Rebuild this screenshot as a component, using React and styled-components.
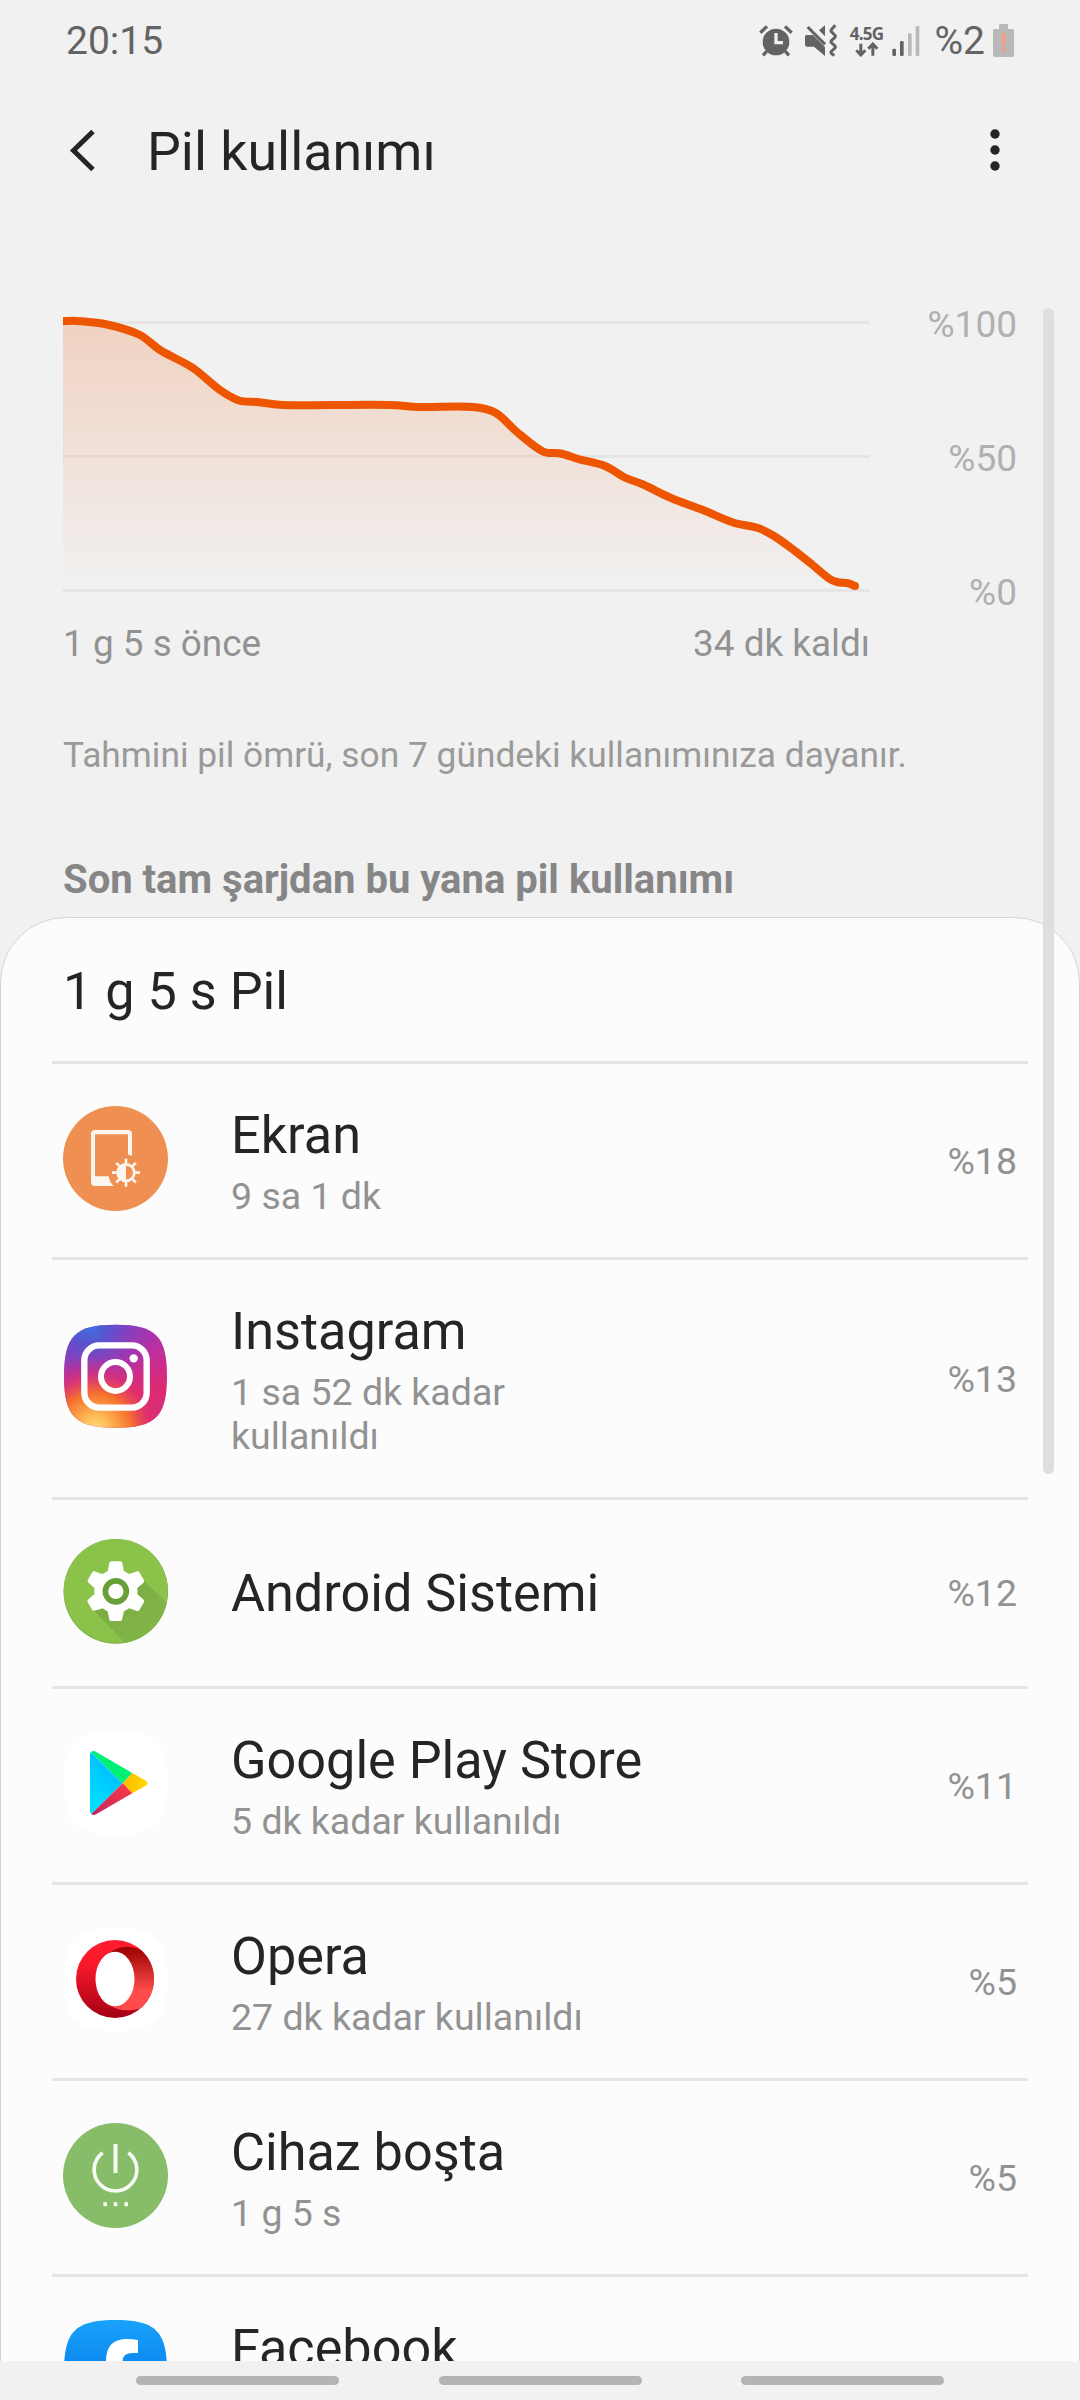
import React from "react";
import styled, { createGlobalStyle } from "styled-components";

const GlobalStyle = createGlobalStyle`
  * {
    box-sizing: border-box;
  }
  body {
    margin: 0;
    background-color: #f1f1f1;
    font-family: Roboto, "Noto Sans", sans-serif;
  }
`;

// battery level, x / y in screen units
const LEVELS = [
  [63, 321],
  [77, 321],
  [107, 324.5],
  [140, 335],
  [160, 350],
  [193, 368],
  [220, 390],
  [239, 400.5],
  [257, 402],
  [283, 405],
  [330, 405],
  [390, 405],
  [420, 407],
  [473, 407],
  [496, 413],
  [517, 432],
  [543, 451.5],
  [561, 453.5],
  [578, 459],
  [605, 466],
  [626, 478],
  [643, 484.5],
  [671, 498],
  [703, 510],
  [733, 522.5],
  [758, 528],
  [774, 536],
  [795, 551],
  [812, 564.5],
  [829, 578.5],
  [837, 582],
  [849, 583.5],
  [855, 586],
];

const slopeAt = (points, i) => {
  const a = points[Math.max(i - 1, 0)];
  const b = points[Math.min(i + 1, points.length - 1)];
  return (b[1] - a[1]) / (b[0] - a[0]);
};

const smoothPath = (points) => {
  let d = `M${points[0][0]} ${points[0][1]}`;
  for (let i = 1; i < points.length; i++) {
    const [x1, y1] = points[i - 1];
    const [x2, y2] = points[i];
    const dx = (x2 - x1) / 3;
    const cy1 = y1 + slopeAt(points, i - 1) * dx;
    const cy2 = y2 - slopeAt(points, i) * dx;
    d += ` C${x1 + dx} ${cy1} ${x2 - dx} ${cy2} ${x2} ${y2}`;
  }
  return d;
};

const squircle = (cx, cy, r) => {
  const k = r * 0.78;
  return `M${cx} ${cy - r} C${cx + k} ${cy - r} ${cx + r} ${cy - k} ${cx + r} ${cy}
    C${cx + r} ${cy + k} ${cx + k} ${cy + r} ${cx} ${cy + r}
    C${cx - k} ${cy + r} ${cx - r} ${cy + k} ${cx - r} ${cy}
    C${cx - r} ${cy - k} ${cx - k} ${cy - r} ${cx} ${cy - r}Z`;
};

const AlarmIcon = () => (
  <svg width="34" height="34" viewBox="57 68 102 102">
    <circle cx="108" cy="122" r="40" fill="#636363" />
    <path
      d="M61 94 81 75M155 94 135 75M80 150 69 162M136 150 147 162"
      stroke="#636363"
      strokeWidth="10"
    />
    <path d="M108 95V124H129" fill="none" stroke="#f1f1f1" strokeWidth="10" />
  </svg>
);

const MuteIcon = () => (
  <svg width="34" height="34" viewBox="192 68 102 102">
    <path
      d="M200 101H219L255 137V164L222 136H200Q195 136 195 131V106Q195 101 200 101ZM255 72V105L237 87Z"
      fill="#636363"
    />
    <path d="M203 77 255 129" stroke="#636363" strokeWidth="9" />
    <path
      d="M286 72 275 84Q271 88 275 92L284 101Q288 105 284 109L275 117Q271 121 275 125L284 133Q288 137 284 141L275 149Q271 153 275 157L283 163"
      fill="none"
      stroke="#636363"
      strokeWidth="9"
    />
  </svg>
);

const ArrowsIcon = () => (
  <svg width="24" height="15" viewBox="344 124 72 45">
    <path
      d="M361.500 129V161M348 149 361.500 163 375 149M397.500 165V132M384 144 397.500 130 411 144"
      fill="none"
      stroke="#636363"
      strokeWidth="9"
    />
  </svg>
);

const SignalIcon = () => (
  <svg width="28" height="32" viewBox="458 70 84 96">
    <rect x="459" y="141" width="11" height="22" rx="4" fill="#636363" />
    <rect x="482" y="118" width="11" height="45" rx="4" fill="#636363" />
    <rect x="506" y="95" width="11" height="68" rx="4" fill="#b9b9b9" />
    <rect x="529" y="73" width="11" height="90" rx="4" fill="#b9b9b9" />
  </svg>
);

const BatteryIcon = () => (
  <svg width="21" height="33" viewBox="759 66 63 99">
    <path
      d="M777 70Q777 66 781 66H800Q804 66 804 70V81H818Q822 81 822 85V160Q822 165 817 165H764Q759 165 759 160V85Q759 81 763 81H777Z"
      fill="#b9b9b9"
    />
    <path d="M784 93H797L796 133H785Z" fill="#f19e82" />
    <circle cx="790.500" cy="142" r="6.500" fill="#f19e82" />
  </svg>
);

const ScreenIcon = () => (
  <AppIcon viewBox="69 78 315 315">
    <circle cx="226.500" cy="235.500" r="157.500" fill="#ef9052" />
    <path
      d="M165 163H264V224Q270 224 276 228V162Q276 150 264 150H165Q153 150 153 162V306Q153 318 165 318H221Q209 308 206 289H165Z"
      fill="#fdf6f0"
    />
    <g stroke="#fdf6f0" strokeWidth="8">
      <path d="M258 236V250M258 306V320M216 278H230M286 278H300M228.500 248.500 238 258M278 298 287.500 307.500M287.500 248.500 278 258M238 298 228.500 307.500" />
      <circle cx="258" cy="278" r="25" fill="none" />
    </g>
    <path d="M258 251A27 27 0 0 0 258 305Z" fill="#fdf6f0" />
  </AppIcon>
);

const InstagramIcon = () => (
  <AppIcon viewBox="69 72 315 315">
    <defs>
      <linearGradient id="igBase" x1="0.3" y1="0" x2="0.7" y2="1">
        <stop offset="0" stopColor="#8f39c0" />
        <stop offset="0.45" stopColor="#c02f9a" />
        <stop offset="0.75" stopColor="#dd2a70" />
        <stop offset="1" stopColor="#d62d7c" />
      </linearGradient>
      <radialGradient id="igBlue" cx="0.25" cy="0" r="0.65">
        <stop offset="0" stopColor="#3c74e0" />
        <stop offset="0.3" stopColor="#4f58d2" stopOpacity="0.85" />
        <stop offset="1" stopColor="#9038c0" stopOpacity="0" />
      </radialGradient>
      <radialGradient id="igWarm" cx="0.3" cy="1.02" r="0.72">
        <stop offset="0" stopColor="#ffdd85" />
        <stop offset="0.2" stopColor="#fdb955" />
        <stop offset="0.5" stopColor="#f66f2e" />
        <stop offset="0.75" stopColor="#e5306a" stopOpacity="0.6" />
        <stop offset="1" stopColor="#d62d7c" stopOpacity="0" />
      </radialGradient>
    </defs>
    <path d={squircle(226.5, 229, 154.5)} fill="url(#igBase)" />
    <path d={squircle(226.5, 229, 154.5)} fill="url(#igBlue)" />
    <path d={squircle(226.5, 229, 154.5)} fill="url(#igWarm)" />
    <rect x="133" y="136" width="187" height="187" rx="45" fill="none" stroke="#fff" strokeWidth="19" />
    <circle cx="226.500" cy="229.500" r="43.500" fill="none" stroke="#fff" strokeWidth="18" />
    <circle cx="281" cy="175" r="12.500" fill="#fff" />
  </AppIcon>
);

const AndroidIcon = () => (
  <AppIcon viewBox="69 87 315 315">
    <defs>
      <clipPath id="androidClip">
        <circle cx="227.500" cy="244.500" r="156.500" />
      </clipPath>
      <linearGradient id="androidShade" x1="0" y1="0" x2="1" y2="1">
        <stop offset="0.2" stopColor="#7bab45" />
        <stop offset="1" stopColor="#86bb4a" />
      </linearGradient>
    </defs>
    <circle cx="227.500" cy="244.500" r="157" fill="#78a843" />
    <circle cx="227.500" cy="242.500" r="156" fill="#8bc34a" />
    <g clipPath="url(#androidClip)">
      <path d="M310 210 400 298V420H276L160 300Z" fill="url(#androidShade)" />
    </g>
    {[0, 60, 120].map((deg) => (
      <path
        key={deg}
        d="M214 154H241Q246 154 247 159L252 185H203L208 159Q209 154 214 154ZM203 303H252L246 329Q245 333 240 333H214Q209 333 208 329Z"
        fill="#fff"
        transform={`rotate(${deg} 227.5 243.5)`}
      />
    ))}
    <circle cx="227.500" cy="243.500" r="65" fill="#fff" />
    <circle cx="227.500" cy="244" r="31.500" fill="#fff" stroke="#689f38" strokeWidth="17" />
  </AppIcon>
);

const PlayIcon = () => (
  <AppIcon viewBox="69 663 315 315">
    <defs>
      <linearGradient id="playBlue" x1="0.8" y1="0" x2="0.2" y2="1">
        <stop offset="0" stopColor="#00b4ff" />
        <stop offset="1" stopColor="#00e2ff" />
      </linearGradient>
      <linearGradient id="playRed" x1="1" y1="0" x2="0" y2="1">
        <stop offset="0" stopColor="#ff3a44" />
        <stop offset="1" stopColor="#c32460" />
      </linearGradient>
      <linearGradient id="playYellow" x1="1" y1="0" x2="0" y2="0">
        <stop offset="0" stopColor="#ffdc00" />
        <stop offset="1" stopColor="#ffb700" />
      </linearGradient>
    </defs>
    <path d={squircle(226.5, 820, 154.5)} fill="#fff" />
    <path d="M153 726 248 820 154 912Q150 910 150 902V735Q150 728 153 726Z" fill="url(#playBlue)" />
    <path d="M153 726Q160 720 170 727L277 789 248 820Z" fill="#00f076" />
    <path d="M277 789 317 812Q329 820 317 827L277 850 248 820Z" fill="url(#playYellow)" />
    <path d="M154 912 248 820 277 850 168 913Q160 917 154 912Z" fill="url(#playRed)" />
  </AppIcon>
);

const OperaIcon = () => (
  <AppIcon viewBox="69 81 315 315">
    <defs>
      <linearGradient id="operaRing" x1="0" y1="0" x2="0" y2="1">
        <stop offset="0.03" stopColor="#ff1b2d" />
        <stop offset="0.3" stopColor="#fa1a2c" />
        <stop offset="1" stopColor="#a40014" />
      </linearGradient>
      <linearGradient id="operaInner" x1="0" y1="0" x2="0" y2="1">
        <stop offset="0" stopColor="#9a0000" />
        <stop offset="0.7" stopColor="#ff4b4b" />
      </linearGradient>
    </defs>
    <path d={squircle(226.5, 238, 154.5)} fill="#fff" />
    <circle cx="225" cy="237" r="117" fill="url(#operaRing)" />
    <path
      d="M208 158Q232 140 262 140Q285 141 303 150Q342 185 342 237Q342 289 303 324Q285 332 262 331Q232 331 208 316Z"
      fill="url(#operaInner)"
    />
    <ellipse cx="225" cy="237" rx="58.500" ry="82" fill="#fff" />
  </AppIcon>
);

const IdleIcon = () => (
  <AppIcon viewBox="69 669 315 315">
    <circle cx="226.500" cy="826.500" r="157.500" fill="#87bc69" />
    <path
      d="M188 758A64 64 0 1 0 265 758"
      fill="none"
      stroke="#f6fbf3"
      strokeWidth="11"
    />
    <path
      d="M226.500 732V819M190 912.500H201M221 912.500H232M253 912.500H264"
      stroke="#f6fbf3"
      strokeWidth="12"
    />
  </AppIcon>
);

const FacebookIcon = () => (
  <AppIcon viewBox="0 0 105 105">
    <defs>
      <linearGradient id="fbBlue" x1="0" y1="0" x2="0" y2="1">
        <stop offset="0" stopColor="#18a3fb" />
        <stop offset="1" stopColor="#0165e1" />
      </linearGradient>
    </defs>
    <path d={squircle(52.5, 52.5, 51.5)} fill="url(#fbBlue)" />
    <path
      d="M43 103V68H31V52H43V42Q43 20 64 20Q70 20 75 21V34H69Q59.500 34 59.500 43V52H74L71 68H59.500V103Z"
      fill="#fff"
    />
  </AppIcon>
);

const APPS = [
  { name: "Ekran", usage: "9 sa 1 dk", percent: "%18", Icon: ScreenIcon },
  { name: "Instagram", usage: "1 sa 52 dk kadar kullanıldı", percent: "%13", Icon: InstagramIcon },
  { name: "Android Sistemi", percent: "%12", Icon: AndroidIcon },
  { name: "Google Play Store", usage: "5 dk kadar kullanıldı", percent: "%11", Icon: PlayIcon },
  { name: "Opera", usage: "27 dk kadar kullanıldı", percent: "%5", Icon: OperaIcon },
  { name: "Cihaz boşta", usage: "1 g 5 s", percent: "%5", Icon: IdleIcon },
  { name: "Facebook", usage: "18 dk kadar kullanıldı", percent: "%5", Icon: FacebookIcon },
];

const BatteryChart = () => {
  const line = smoothPath(LEVELS);
  return (
    <svg width="807" height="311" viewBox="63 303 807 311">
      <defs>
        <linearGradient id="levelFill" gradientUnits="userSpaceOnUse" x1="0" y1="321" x2="0" y2="590">
          <stop offset="0" stopColor="#ed5500" stopOpacity="0.2" />
          <stop offset="1" stopColor="#ed5500" stopOpacity="0" />
        </linearGradient>
      </defs>
      <path d="M63 322.500H870M63 456.500H870M63 590.500H870" stroke="#e5e5e5" strokeWidth="3" />
      <path d={`${line} V590H63Z`} fill="url(#levelFill)" />
      <path d={line} fill="none" stroke="#ed5500" strokeWidth="8" strokeLinejoin="round" />
      <circle cx="855" cy="586" r="4" fill="#ed5500" />
    </svg>
  );
};

const App = () => {
  return (
    <Screen>
      <GlobalStyle />
      <StatusBar>
        <Clock>20:15</Clock>
        <StatusIcons>
          <AlarmIcon />
          <MuteIcon />
          <Network>
            <NetworkType>4.5G</NetworkType>
            <ArrowsIcon />
          </Network>
          <SignalIcon />
          <BatteryText>%2</BatteryText>
          <BatteryIcon />
        </StatusIcons>
      </StatusBar>
      <Header>
        <svg width="30" height="46" viewBox="68 126 30 46">
          <path d="M93 130.500 73.500 149.500 93 168.500" fill="none" stroke="#252525" strokeWidth="5" />
        </svg>
        <PageTitle>Pil kullanımı</PageTitle>
        <svg width="10" height="44" viewBox="0 0 10 44">
          <circle cx="5" cy="6" r="4.700" fill="#252525" />
          <circle cx="5" cy="22" r="4.700" fill="#252525" />
          <circle cx="5" cy="38" r="4.700" fill="#252525" />
        </svg>
      </Header>
      <Content>
        <ChartRow>
          <BatteryChart />
          <Scale>
            <span>%100</span>
            <span>%50</span>
            <span>%0</span>
          </Scale>
        </ChartRow>
        <TimeRow>
          <span>1 g 5 s önce</span>
          <span>34 dk kaldı</span>
        </TimeRow>
        <Note>Tahmini pil ömrü, son 7 gündeki kullanımınıza dayanır.</Note>
        <SectionTitle>Son tam şarjdan bu yana pil kullanımı</SectionTitle>
        <Card>
          <CardTitle>1 g 5 s Pil</CardTitle>
          {APPS.map(({ name, usage, percent, Icon }) => (
            <AppRow key={name}>
              <Icon />
              <AppInfo $single={!usage}>
                <AppName>{name}</AppName>
                {usage && <AppUsage>{usage}</AppUsage>}
              </AppInfo>
              <Percent>{percent}</Percent>
            </AppRow>
          ))}
        </Card>
        <ScrollThumb />
      </Content>
      <NavBar>
        <NavHandle />
        <NavHandle />
        <NavHandle />
      </NavBar>
    </Screen>
  );
};

export default App;

const Screen = styled.div`
  display: flex;
  flex-direction: column;
  width: 1080px;
  height: 2400px;
  overflow: hidden;
  background-color: #f1f1f1;
  color: #252525;

  svg {
    display: block;
    flex-shrink: 0;
  }
`;

const StatusBar = styled.div`
  display: flex;
  align-items: center;
  justify-content: space-between;
  height: 81px;
  padding: 0 66px;
  color: #636363;
`;

const Clock = styled.div`
  font-size: 39px;
`;

const StatusIcons = styled.div`
  display: flex;
  align-items: center;

  svg:first-child {
    margin-right: 11px;
  }
`;

const Network = styled.div`
  display: flex;
  flex-direction: column;
  align-items: center;
  width: 36px;
  margin: 0 7px 0 11px;
`;

const NetworkType = styled.div`
  font-family: "Open Sans", sans-serif;
  font-size: 17px;
  line-height: 17px;
  font-weight: bold;
  letter-spacing: -0.8px;
`;

const BatteryText = styled.div`
  margin: 0 8px 0 15px;
  font-size: 39px;
`;

const Header = styled.div`
  display: flex;
  align-items: center;
  height: 137px;
  padding: 0 80px 0 68px;
`;

const PageTitle = styled.h1`
  flex-grow: 1;
  margin: 0;
  padding: 4px 0 0 49px;
  font-size: 53.7px;
  font-weight: normal;
`;

const Content = styled.div`
  position: relative;
  flex: 1;
  overflow: hidden;
  padding-top: 85px;
`;

const ChartRow = styled.div`
  display: flex;
  justify-content: space-between;
  padding: 0 63px;
`;

const Scale = styled.div`
  display: flex;
  flex-direction: column;
  justify-content: space-between;
  text-align: right;
  font-size: 37px;
  line-height: 43px;
  color: #b0b0b0;
`;

const TimeRow = styled.div`
  display: flex;
  justify-content: space-between;
  width: 807px;
  margin: 8px 0 0 63px;
  font-size: 36.9px;
  line-height: 43px;
  color: #929292;
`;

const Note = styled.p`
  margin: 69px 63px 0;
  font-size: 35.35px;
  line-height: 42px;
  color: #9a9a9a;
`;

const SectionTitle = styled.h2`
  margin: 81px 63px 14px;
  font-size: 40px;
  line-height: 46px;
  font-weight: bold;
  color: #868686;
`;

const Card = styled.div`
  padding: 0 51px;
  border: 1px solid #d5d5d5;
  border-radius: 66px 66px 0 0;
  background-color: #fcfcfc;
`;

const CardTitle = styled.div`
  height: 146px;
  padding: 43px 11px 0;
  border-bottom: 3px solid #e5e5e5;
  font-size: 52.2px;
  line-height: 61px;
`;

const AppRow = styled.div`
  display: flex;
  align-items: center;
  padding: 0 11px;
  border-bottom: 3px solid #e5e5e5;
`;

const AppIcon = styled.svg`
  width: 105px;
  height: 105px;
  margin-bottom: 4px;
`;

const AppInfo = styled.div`
  flex-grow: 1;
  margin-left: 63px;
  padding: ${(props) => (props.$single ? "63px 0 62px" : "41px 0 39px")};
`;

const AppName = styled.div`
  font-size: 52.2px;
  line-height: 61px;
`;

const AppUsage = styled.div`
  max-width: 400px;
  margin-top: 8px;
  font-size: 37.5px;
  line-height: 44px;
  color: #929292;
`;

const Percent = styled.div`
  font-size: 37.5px;
  line-height: 44px;
  color: #929292;
`;

const ScrollThumb = styled.div`
  position: absolute;
  top: 90px;
  right: 26px;
  width: 11px;
  height: 1166px;
  border-radius: 6px;
  background-color: #dedede;
`;

const NavBar = styled.div`
  display: flex;
  justify-content: center;
  gap: 99.5px;
  height: 39px;
  padding-top: 15px;
  background-color: #f1f1f1;
`;

const NavHandle = styled.div`
  width: 203px;
  height: 9px;
  border-radius: 5px;
  background-color: #b4b4b4;
`;
